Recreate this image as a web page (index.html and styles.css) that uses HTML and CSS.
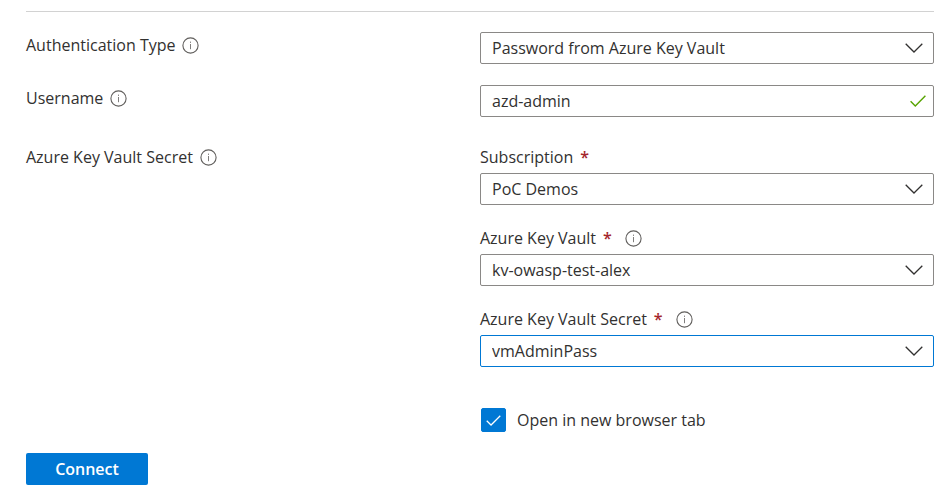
FILE: index.html
```html
<!DOCTYPE html>
<html lang="en">
<head>
<meta charset="utf-8">
<meta name="viewport" content="width=device-width, initial-scale=1">
<title>Connect</title>
<link rel="stylesheet" href="styles.css">
</head>
<body>
<svg class="symbols" aria-hidden="true">
  <symbol id="info" viewBox="0 0 17 17">
    <circle cx="8.500" cy="8.500" r="7.600" fill="none" stroke="currentColor" stroke-width="1.100"/>
    <path d="M8.500 7V12.200M8.500 4.600V5.900" fill="none" stroke="currentColor" stroke-width="1" opacity=".8"/>
  </symbol>
  <symbol id="chevron" viewBox="0 0 18 10">
    <path d="M.7 .8 9 9 17.300 .8" fill="none" stroke="currentColor" stroke-width="1.300"/>
  </symbol>
  <symbol id="check" viewBox="0 0 16 12">
    <path d="M.6 6.200 5.300 10.900 15.400 .8" fill="none" stroke="currentColor" stroke-width="1.400"/>
  </symbol>
</svg>
<form class="form">
  <hr class="divider">
  <div class="row">
    <div class="caption"><label for="auth">Authentication Type</label><svg class="info"><use href="#info"/></svg></div>
    <div class="control">
      <select id="auth" class="box"><option>Password from Azure Key Vault</option></select>
      <svg class="chevron"><use href="#chevron"/></svg>
    </div>
  </div>
  <div class="row">
    <div class="caption"><label for="user">Username</label><svg class="info"><use href="#info"/></svg></div>
    <div class="control">
      <input id="user" class="box" type="text" value="azd-admin">
      <svg class="valid"><use href="#check"/></svg>
    </div>
  </div>
  <div class="row row-group">
    <div class="caption"><span>Azure Key Vault Secret</span><svg class="info"><use href="#info"/></svg></div>
    <div class="fields">
      <div class="field">
        <div class="caption"><label for="sub">Subscription</label><span class="required">*</span></div>
        <div class="control">
          <select id="sub" class="box"><option>PoC Demos</option></select>
          <svg class="chevron"><use href="#chevron"/></svg>
        </div>
      </div>
      <div class="field">
        <div class="caption"><label for="vault">Azure Key Vault</label><span class="required">*</span><svg class="info info-spaced"><use href="#info"/></svg></div>
        <div class="control">
          <select id="vault" class="box"><option>kv-owasp-test-alex</option></select>
          <svg class="chevron"><use href="#chevron"/></svg>
        </div>
      </div>
      <div class="field">
        <div class="caption"><label for="secret">Azure Key Vault Secret</label><span class="required">*</span><svg class="info info-spaced"><use href="#info"/></svg></div>
        <div class="control">
          <select id="secret" class="box box-active"><option>vmAdminPass</option></select>
          <svg class="chevron"><use href="#chevron"/></svg>
        </div>
      </div>
      <label class="option">
        <span class="tick"><input type="checkbox" class="tick-input" checked><svg class="tick-mark"><use href="#check"/></svg></span>
        <span>Open in new browser tab</span>
      </label>
    </div>
  </div>
  <button type="button" class="connect">Connect</button>
</form>
</body>
</html>
```
FILE: styles.css
```css
* {
  box-sizing: border-box;
}

body {
  margin: 0;
  background: #fff;
  color: #323130;
  font-family: "Segoe UI", "Open Sans", "Noto Sans", sans-serif;
  font-size: 16px;
  line-height: 24px;
}

.symbols {
  display: none;
}

.form {
  padding: 11px 10px 16px 26px;
}

.divider {
  height: 1px;
  margin: 0 0 20px;
  border: 0;
  background: #d2d2d2;
}

.row {
  display: grid;
  grid-template-columns: 1fr 1fr;
  margin-bottom: 21px;
}

.row-group {
  margin-top: 28px;
}

.caption {
  display: flex;
  align-items: center;
  gap: 7px;
  height: 24px;
  white-space: nowrap;
}

.row > .caption {
  margin-top: 1px;
}

.row-group > .caption {
  margin-top: 0;
}

.info {
  width: 17px;
  height: 17px;
  color: #605e5c;
}

.info-spaced {
  margin-left: 6px;
}

.required {
  color: #a4262c;
  font-weight: 600;
}

.control {
  position: relative;
}

.box {
  display: block;
  width: 100%;
  height: 32px;
  margin: 0;
  padding: 0 40px 0 11px;
  border: 1px solid #8a8886;
  border-radius: 2px;
  outline: 0;
  background: #fff;
  color: inherit;
  font: inherit;
  appearance: none;
}

.box-active {
  border-color: #0078d4;
}

.chevron,
.valid {
  position: absolute;
  top: 50%;
  transform: translateY(-50%);
  pointer-events: none;
}

.chevron {
  right: 11px;
  width: 18px;
  height: 10px;
}

.valid {
  right: 8px;
  width: 16px;
  height: 12px;
  color: #57a300;
}

.fields {
  display: grid;
  gap: 21px;
}

.field {
  display: grid;
  gap: 4px;
}

.option {
  display: flex;
  align-items: center;
  gap: 11px;
  margin: 20px 0 0 1px;
}

.tick {
  position: relative;
  width: 25px;
  height: 24px;
}

.tick-input {
  display: block;
  width: 100%;
  height: 100%;
  margin: 0;
  border: 1px solid #0078d4;
  border-radius: 2px;
  appearance: none;
}

.tick-input:checked {
  background: #0078d4;
}

.tick-mark {
  position: absolute;
  inset: 7px 5px;
  width: 15px;
  height: 11px;
  color: #fff;
  pointer-events: none;
}

.connect {
  height: 32px;
  min-width: 122px;
  padding: 0 28px;
  border: 0;
  border-radius: 2px;
  background: #0078d4;
  color: #fff;
  font: inherit;
  font-weight: 600;
}
```
